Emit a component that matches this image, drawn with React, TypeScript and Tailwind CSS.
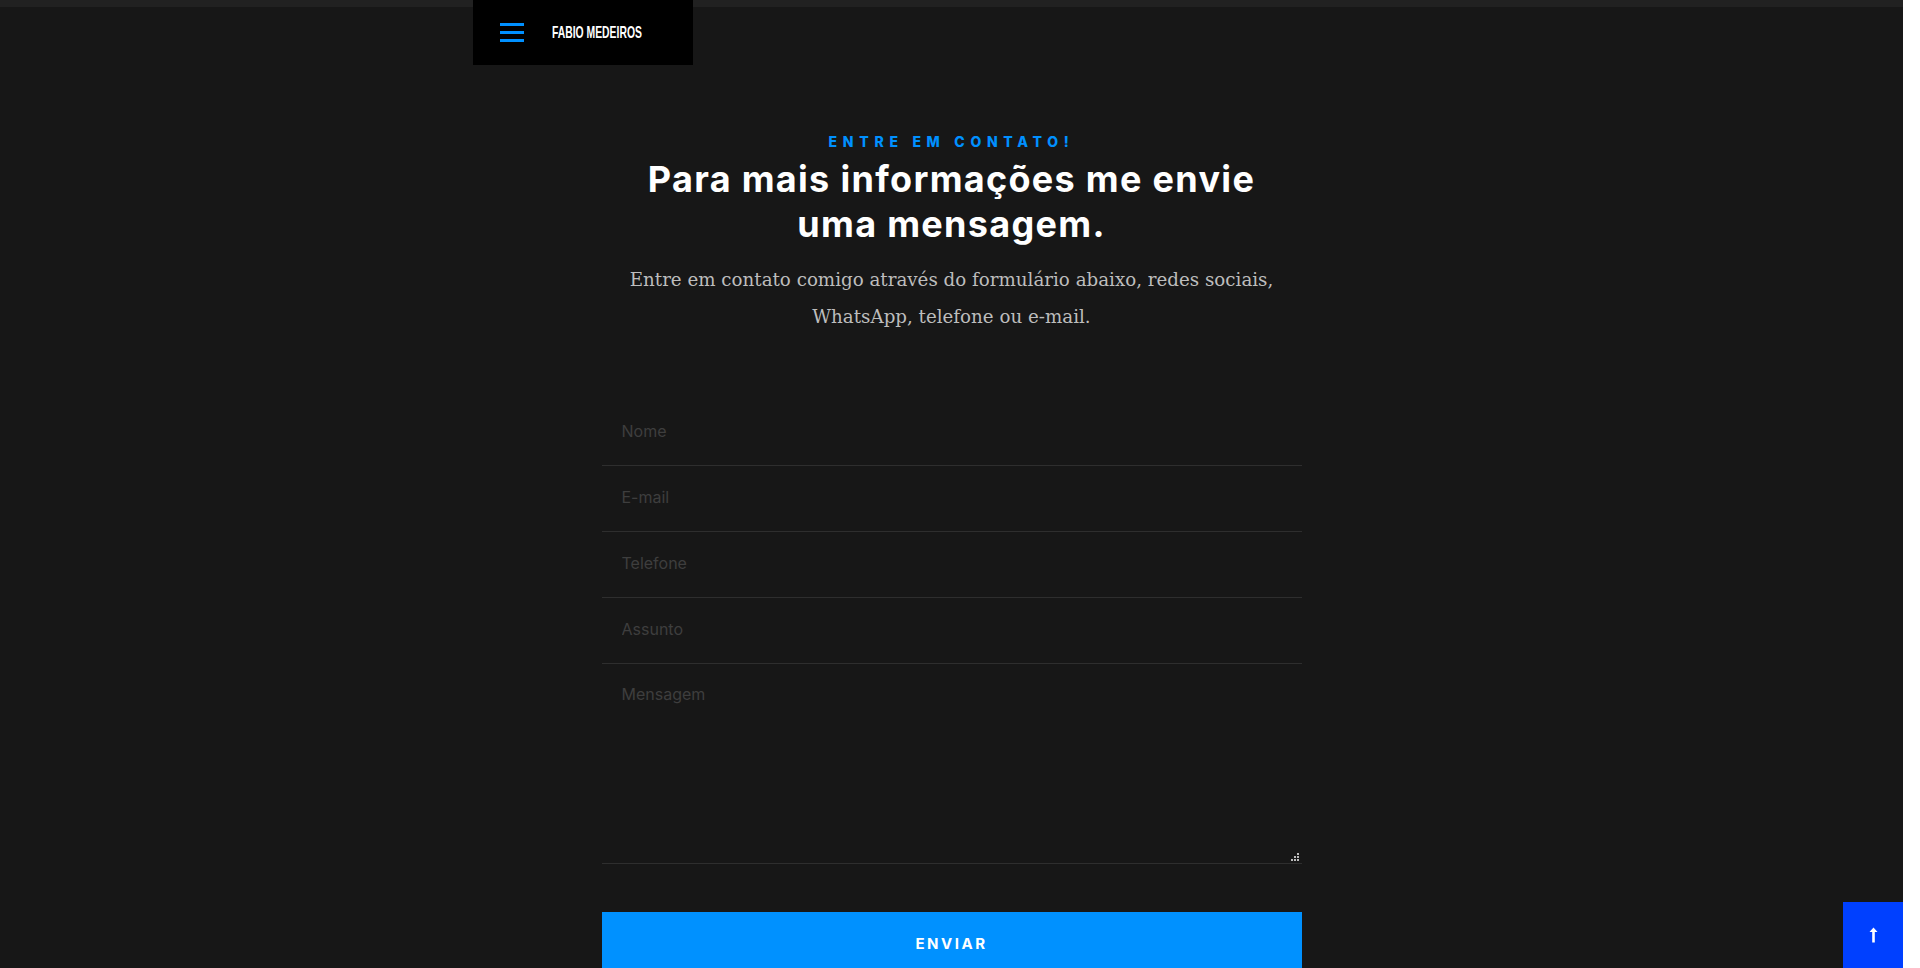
import React from "react";

const sans = "font-['Inter','Liberation_Sans',sans-serif]";

function Field({ placeholder }: { placeholder: string }) {
  return (
    <input
      type="text"
      placeholder={placeholder}
      className={`block w-full h-[66px] bg-transparent border-b border-[#2e2e2e] px-5 pb-[3px] text-[16px] text-[#cccccc] placeholder:text-[#3e3e3e] outline-none ${sans}`}
    />
  );
}

export default function App() {
  return (
    <div className="w-[1920px] h-[968px] flex overflow-hidden bg-white">
      <div className="relative flex-1 h-full bg-[#171717] flex flex-col overflow-hidden">
        <div className="h-[7px] bg-[#212121] shrink-0" />

        {/* fixed header */}
        <div className="absolute left-[473px] top-0 w-[220px] h-[65px] bg-black flex items-center pl-[27px] gap-[28px]">
          <div className="flex flex-col gap-[5px] w-[24px] shrink-0">
            <span className="block h-[3px] w-[24px] bg-[#0090ff]" />
            <span className="block h-[3px] w-[24px] bg-[#0090ff]" />
            <span className="block h-[3px] w-[24px] bg-[#0090ff]" />
          </div>
          <span className="inline-block origin-left scale-x-[0.61] text-white font-bold text-[17px] leading-none font-['Liberation_Sans',Arial,sans-serif] whitespace-nowrap">
            FABIO MEDEIROS
          </span>
        </div>

        <div className="flex flex-col items-center pt-[125px]">
          <p className={`text-[14px] leading-[20px] font-extrabold tracking-[5.7px] text-[#0090ff] ${sans}`}>
            ENTRE EM CONTATO!
          </p>
          <h1 className={`mt-[5px] text-center text-white text-[36px] leading-[45px] font-bold tracking-[1.3px] ${sans}`}>
            Para mais informações me envie
            <br />
            uma mensagem.
          </h1>
          <p className="mt-[14px] text-center text-[#bdbdbd] text-[18.25px] leading-[37px] font-['DejaVu_Serif','Liberation_Serif',serif]">
            Entre em contato comigo através do formulário abaixo, redes sociais,
            <br />
            WhatsApp, telefone ou e-mail.
          </p>

          <form className="w-[700px] mt-[65px] flex flex-col" onSubmit={(e) => e.preventDefault()}>
            <Field placeholder="Nome" />
            <Field placeholder="E-mail" />
            <Field placeholder="Telefone" />
            <Field placeholder="Assunto" />
            <div className="relative">
              <textarea
                placeholder="Mensagem"
                className={`block w-full h-[200px] resize-none bg-transparent border-b border-[#2e2e2e] px-5 pt-[19px] text-[16px] leading-[22px] text-[#cccccc] placeholder:text-[#3e3e3e] outline-none ${sans}`}
              />
              <svg className="absolute right-[3px] bottom-[3px]" width="8" height="8" viewBox="0 0 8 8">
                <rect x="6" y="0" width="2" height="2" fill="#bbbbbb" />
                <rect x="3" y="3" width="2" height="2" fill="#bbbbbb" />
                <rect x="6" y="3" width="2" height="2" fill="#bbbbbb" />
                <rect x="0" y="6" width="2" height="2" fill="#bbbbbb" />
                <rect x="3" y="6" width="2" height="2" fill="#bbbbbb" />
                <rect x="6" y="6" width="2" height="2" fill="#bbbbbb" />
              </svg>
            </div>
            <button
              type="submit"
              className={`mt-[48px] h-[64px] w-full bg-[#0091ff] text-white text-[15px] font-bold tracking-[2.5px] ${sans}`}
            >
              ENVIAR
            </button>
          </form>
        </div>

        {/* back to top */}
        <div className="absolute right-0 bottom-0 w-[60px] h-[66px] bg-[#0040ff] flex items-center justify-center">
          <svg width="9" height="16" viewBox="0 0 9 16" fill="none">
            <path d="M4.5 0.5 L0.5 5 H3.2 V15.5 H5.8 V5 H8.5 Z" fill="white" />
          </svg>
        </div>
      </div>
      <div className="w-[17px] h-full bg-white shrink-0" />
    </div>
  );
}
